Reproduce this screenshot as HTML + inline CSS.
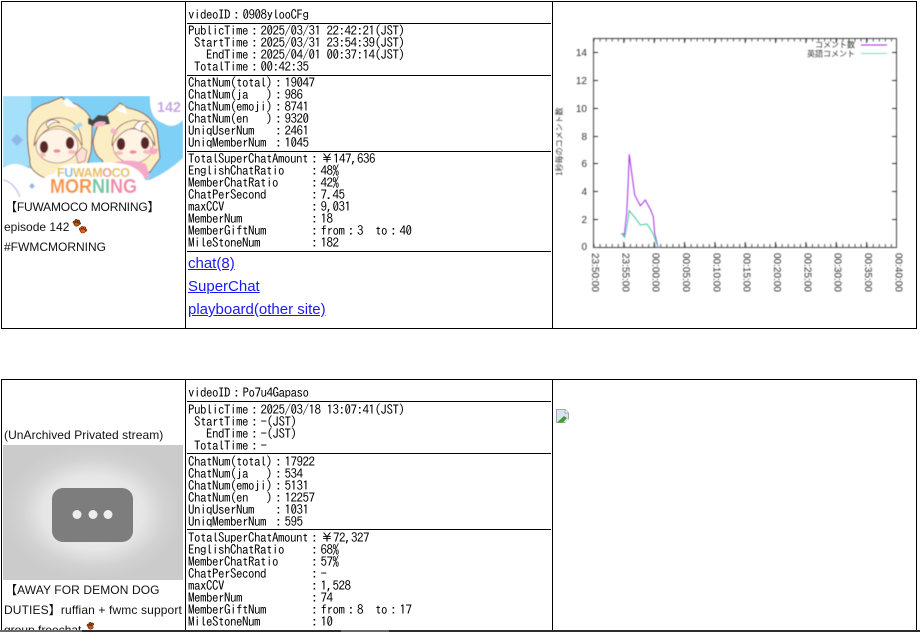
<!DOCTYPE html>
<html><head><meta charset="utf-8"><style>
html,body{margin:0;padding:0;width:920px;height:632px;overflow:hidden;background:#fff}
body{position:relative;color:#000;font-family:"Liberation Sans","Noto Sans CJK JP",sans-serif}
.h,.v{position:absolute;background:#000}
.h{height:1px}.v{width:1px}
pre{position:absolute;left:188px;margin:0;font:13px/12px "IPAGothic","Liberation Mono",monospace;letter-spacing:-.5px;white-space:pre;color:#000}
.t{position:absolute;left:4px;font-size:12px;line-height:20px;white-space:nowrap;color:#111}
a{position:absolute;left:188px;font-size:15px;line-height:20px;color:#1a1aee;text-decoration:underline;white-space:nowrap}
svg{position:absolute;overflow:hidden}
</style></head><body>

<!-- table 1 borders -->
<div class="h" style="left:1px;top:1px;width:916px"></div>
<div class="h" style="left:1px;top:328px;width:916px"></div>
<div class="v" style="left:1px;top:1px;height:328px"></div>
<div class="v" style="left:185px;top:1px;height:328px"></div>
<div class="v" style="left:552px;top:1px;height:328px"></div>
<div class="v" style="left:916px;top:1px;height:328px"></div>
<div class="h" style="left:187px;top:23px;width:364px"></div>
<div class="h" style="left:187px;top:75px;width:364px"></div>
<div class="h" style="left:187px;top:151px;width:364px"></div>
<div class="h" style="left:187px;top:251px;width:364px"></div>

<!-- thumb 1 -->
<svg style="left:3px;top:96px" width="180" height="101" viewBox="3 96 180 101">
<defs><filter id="b"><feGaussianBlur stdDeviation="0.4"/></filter></defs>
<g filter="url(#b)">
<rect x="3" y="96" width="180" height="101" fill="#7fd0f6"/>
<rect x="3" y="96" width="28" height="70" fill="#a4e0fa"/>
<path d="M3 168Q14 160 28 168Q50 170 60 178L150 180Q168 172 183 158V197H3Z" fill="#fff"/>
<path d="M3 180Q14 182 20 197" fill="none" stroke="#c8b4e6" stroke-width="1.200"/>
<path d="M14 137l3-3 3 3 3 3-3 3-3 3-3-3-3-3Z" fill="#8fb8ea"/>
<path d="M32 183l3 3-3 3-3-3Z" fill="#8fb8ea"/>
<path d="M150 96h33v24q-10 10-20 3q-14-4-13-27Z" fill="#fff"/>
<text x="157" y="112" font-family="Liberation Sans" font-weight="700" font-size="15" fill="#c3a3e3" textLength="24" lengthAdjust="spacingAndGlyphs">142</text>
<!-- left girl -->
<path d="M28 118Q34 106 48 103L62 97L66 103Q76 102 80 107Q92 114 92 128Q92 142 91 152L84 176L50 180Q28 172 30 160Q26 140 28 118Z" fill="#fbeec4" stroke="#8a4a44" stroke-width="1"/>
<path d="M63 101l4-3 11 10-12-2Z" fill="#fff"/>
<ellipse cx="57" cy="146" rx="21" ry="17" fill="#fff3e6" stroke="#8a4a44" stroke-width=".6"/>
<path d="M34 146Q36 118 60 118Q82 120 82 146Q74 128 58 126Q42 128 34 146Z" fill="#fbeec4" stroke="#8a4a44" stroke-width=".8"/>
<path d="M46 124Q52 116 60 123Q52 120 48 128Z" fill="#fff" stroke="#8a4a44" stroke-width=".7"/>
<ellipse cx="44" cy="147" rx="4.200" ry="6" fill="#5a2525"/>
<ellipse cx="70" cy="143" rx="4.200" ry="6" fill="#5a2525"/>
<ellipse cx="57" cy="151" rx="3.500" ry="1.800" fill="#f08a86"/>
<ellipse cx="42" cy="155" rx="4" ry="2" fill="#f8bcb8"/>
<ellipse cx="72" cy="152" rx="4" ry="2" fill="#f8bcb8"/>
<path d="M76 154l6-7 5 4-2 10-7 2Z" fill="#fde0d8" stroke="#8a4a44" stroke-width=".6"/>
<path d="M72 128l8-6 3 3-8 6Z" fill="#a9d6f0"/>
<!-- right girl -->
<path d="M93 142Q96 120 113 110L120 103L128 108Q150 112 157 130L160 158L150 172L110 178L102 160Q94 155 93 142Z" fill="#fbeec4" stroke="#8a4a44" stroke-width="1"/>
<path d="M116 110l8-5 3 9Z" fill="#fff"/>
<ellipse cx="133" cy="146" rx="20" ry="17" fill="#fff3e6" stroke="#8a4a44" stroke-width=".6"/>
<path d="M112 146Q112 124 134 120Q154 122 155 146Q148 130 134 128Q120 130 112 146Z" fill="#fbeec4" stroke="#8a4a44" stroke-width=".8"/>
<path d="M134 128Q138 118 148 122Q140 124 142 132Z" fill="#fff" stroke="#8a4a44" stroke-width=".7"/>
<ellipse cx="121" cy="144" rx="4.200" ry="6" fill="#5a2525"/>
<ellipse cx="145" cy="143" rx="4.200" ry="6" fill="#5a2525"/>
<ellipse cx="133" cy="152" rx="3.500" ry="1.800" fill="#f08a86"/>
<ellipse cx="119" cy="153" rx="4" ry="2" fill="#f8bcb8"/>
<ellipse cx="147" cy="152" rx="4" ry="2" fill="#f8bcb8"/>
<path d="M106 166Q125 156 146 164L150 178H112Z" fill="#f5a9c7"/>
<path d="M88 118l5 2 5-5 10 1 2 8-8 1-4-3-5 4-5-2Z" fill="#444"/>
<path d="M94 124q4-4 12-2l-2 4q-6 0-10 2Z" fill="#f5b4c8"/>
<path d="M112 128l6 3-2 4-6-3Z" fill="#f5b4c8"/>
<path d="M150 146l4 3 4-1-1 5-4 2-4-4Z" fill="#f5a9c7"/>
<!-- logo -->
<path d="M43 190Q38 176 54 174Q58 163 80 164Q110 160 128 165Q146 172 146 186Q146 194 138 197H50Z" fill="#fff"/>
<text x="57" y="177" font-family="Liberation Sans" font-weight="700" font-size="12.500" textLength="73" lengthAdjust="spacing" fill="#e6be50">F<tspan fill="#7cc0e8">U</tspan>WAM<tspan fill="#e89a80">O</tspan>C<tspan fill="#e6be50">O</tspan></text>
<text x="50" y="193" font-family="Liberation Sans" font-weight="700" font-size="20" textLength="87" lengthAdjust="spacingAndGlyphs" fill="#f5963c">MOR<tspan fill="#6fc6a4">NI</tspan><tspan fill="#f08aa8">NG</tspan></text>
</g>
</svg>

<div class="t" style="top:197px;left:5px;letter-spacing:-.18px">【FUWAMOCO MORNING】</div>
<div class="t" style="top:217px">episode 142</div>
<svg style="left:72px;top:219px" width="16" height="16" viewBox="0 0 16 16">
<g stroke="#3a1c0c" stroke-width=".5"><circle cx="2.200" cy="3.200" r="1.300" fill="#a8440f"/><circle cx="4.200" cy="1.500" r="1.300" fill="#a8440f"/><circle cx="6.500" cy="2.200" r="1.300" fill="#a8440f"/><circle cx="7.500" cy="4.300" r="1.200" fill="#a8440f"/><ellipse cx="4.600" cy="5.200" rx="2.600" ry="2" fill="#c9540f"/>
<circle cx="8.400" cy="10" r="1.300" fill="#d4590f"/><circle cx="10.200" cy="8.500" r="1.300" fill="#d4590f"/><circle cx="12.600" cy="9" r="1.300" fill="#d4590f"/><circle cx="13.700" cy="11.200" r="1.200" fill="#d4590f"/><ellipse cx="10.800" cy="12" rx="2.700" ry="2" fill="#e8620f"/></g></svg>
<div class="t" style="top:237px">#FWMCMORNING</div>

<pre style="top:9px">videoID：0908ylooCFg</pre>
<pre style="top:25px">PublicTime：2025/03/31 22:42:21(JST)
 StartTime：2025/03/31 23:54:39(JST)
   EndTime：2025/04/01 00:37:14(JST)
 TotalTime：00:42:35</pre>
<pre style="top:77px">ChatNum(total)：19047
ChatNum(ja   )：986
ChatNum(emoji)：8741
ChatNum(en   )：9320
UniqUserNum   ：2461
UniqMemberNum ：1045</pre>
<pre style="top:153px">TotalSuperChatAmount：￥147,636
EnglishChatRatio    ：48%
MemberChatRatio     ：42%
ChatPerSecond       ：7.45
maxCCV              ：9,031
MemberNum           ：18
MemberGiftNum       ：from：3  to：40
MileStoneNum        ：182</pre>
<a style="top:254px">chat(8)</a>
<a style="top:277px">SuperChat</a>
<a style="top:300px">playboard(other site)</a>

<!-- chart -->
<svg style="left:553px;top:20px" width="363" height="290" viewBox="553 20 363 290">
<defs><filter id="c"><feGaussianBlur stdDeviation="0.4"/></filter></defs>
<g filter="url(#c)">
<rect x="593.500" y="38.500" width="303" height="209" fill="none" stroke="#444" stroke-width="1"/>
<g stroke="#333" stroke-width="1">
<path d="M593 52.500h5M593 80.500h5M593 108.500h5M593 136.500h5M593 163.500h5M593 191.500h5M593 219.500h5M897 52.500h-5M897 80.500h-5M897 108.500h-5M897 136.500h-5M897 163.500h-5M897 191.500h-5M897 219.500h-5"/>
<path d="M623.800 247v-5M654.200 247v-5M684.500 247v-5M714.900 247v-5M745.200 247v-5M775.500 247v-5M805.900 247v-5M836.200 247v-5M866.600 247v-5M623.800 38v5M654.200 38v5M684.500 38v5M714.900 38v5M745.200 38v5M775.500 38v5M805.900 38v5M836.200 38v5M866.600 38v5"/>
<path d="M593.500 245.500H897M593.500 40H897" stroke-dasharray="1 5.070" stroke-width="3" stroke-opacity=".8"/>
</g>
<polyline fill="none" stroke="#a92fe6" stroke-width="1" points="622,233.300 624.300,235 626.700,213.300 628,186.700 629.300,154.300 631.300,170 634.700,195 640.300,205.700 645.300,200 650.700,210 653.300,216.700 654.700,233.300 658,247.300 660.300,247.300"/>
<polyline fill="none" stroke="#3fc49a" stroke-width="1" points="621.300,233.300 624.700,237.300 627.300,223.300 629.300,210.700 634.700,217.300 640.300,225 647,224 653,233.300 658,247.300"/>
<g font-family="Liberation Sans" font-size="10" fill="#333" text-anchor="end">
<text x="587" y="56">14</text><text x="587" y="84">12</text><text x="587" y="112">10</text><text x="587" y="140">8</text><text x="587" y="167">6</text><text x="587" y="195">4</text><text x="587" y="223">2</text><text x="587" y="250">0</text>
</g>
<g font-family="Liberation Sans" font-size="10" fill="#333">
<text transform="translate(592,253) rotate(90)">23:50:00</text>
<text transform="translate(622.300,253) rotate(90)">23:55:00</text>
<text transform="translate(652.700,253) rotate(90)">00:00:00</text>
<text transform="translate(683,253) rotate(90)">00:05:00</text>
<text transform="translate(713.400,253) rotate(90)">00:10:00</text>
<text transform="translate(743.700,253) rotate(90)">00:15:00</text>
<text transform="translate(774,253) rotate(90)">00:20:00</text>
<text transform="translate(804.400,253) rotate(90)">00:25:00</text>
<text transform="translate(834.700,253) rotate(90)">00:30:00</text>
<text transform="translate(865.100,253) rotate(90)">00:35:00</text>
<text transform="translate(895.400,253) rotate(90)">00:40:00</text>
</g>
<g font-family="'Noto Sans CJK JP',sans-serif" font-size="8" fill="#333">
<text x="855" y="47.500" text-anchor="end">コメント数</text>
<text x="855" y="56.500" text-anchor="end">英語コメント</text>
<text transform="translate(562,176) rotate(-90)" font-size="8">1秒毎のコメント数</text>
</g>
<path d="M861 45h26" stroke="#a92fe6"/><path d="M861 53.500h26" stroke="#7fe0c0"/>
</g>
</svg>

<!-- table 2 borders -->
<div class="h" style="left:1px;top:379px;width:916px"></div>
<div class="v" style="left:1px;top:379px;height:252px"></div>
<div class="v" style="left:185px;top:379px;height:252px"></div>
<div class="v" style="left:552px;top:379px;height:252px"></div>
<div class="v" style="left:916px;top:379px;height:252px"></div>
<div class="h" style="left:187px;top:401px;width:364px"></div>
<div class="h" style="left:187px;top:453px;width:364px"></div>
<div class="h" style="left:187px;top:529px;width:364px"></div>

<div class="t" style="top:425px;letter-spacing:.07px">(UnArchived Privated stream)</div>
<svg style="left:3px;top:445px" width="180" height="135" viewBox="0 0 180 135">
<defs><radialGradient id="g" cx="50%" cy="50%" r="50%"><stop offset="0" stop-color="#f0f0f0"/><stop offset=".55" stop-color="#e6e6e6"/><stop offset=".8" stop-color="#d2d2d2"/><stop offset="1" stop-color="#cbcbcb"/></radialGradient></defs>
<rect width="180" height="135" fill="#cbcbcb"/>
<rect width="180" height="135" fill="url(#g)"/>
<rect x="49" y="43" width="81" height="54" rx="11" fill="#7d7d7d"/>
<circle cx="74" cy="69.500" r="4.500" fill="#eee"/><circle cx="90" cy="69.500" r="4.500" fill="#eee"/><circle cx="105" cy="69.500" r="4.500" fill="#eee"/>
</svg>
<div class="t" style="top:580px;left:5px;letter-spacing:.1px">【AWAY FOR DEMON DOG</div>
<div class="t" style="top:600px;letter-spacing:.13px">DUTIES】ruffian + fwmc support</div>
<div class="t" style="top:620px">group freechat</div>
<svg style="left:86px;top:622px" width="14" height="14" viewBox="0 0 14 14"><g stroke="#3a1c0c" stroke-width=".5"><circle cx="2.200" cy="3.200" r="1.300" fill="#a8440f"/><circle cx="4.200" cy="1.500" r="1.300" fill="#a8440f"/><circle cx="6.500" cy="2.200" r="1.300" fill="#a8440f"/><ellipse cx="4.600" cy="5.200" rx="2.600" ry="2" fill="#c9540f"/></g></svg>

<pre style="top:387px">videoID：Po7u4Gapaso</pre>
<pre style="top:404px">PublicTime：2025/03/18 13:07:41(JST)
 StartTime：-(JST)
   EndTime：-(JST)
 TotalTime：-</pre>
<pre style="top:456px">ChatNum(total)：17922
ChatNum(ja   )：534
ChatNum(emoji)：5131
ChatNum(en   )：12257
UniqUserNum   ：1031
UniqMemberNum ：595</pre>
<pre style="top:532px">TotalSuperChatAmount：￥72,327
EnglishChatRatio    ：68%
MemberChatRatio     ：57%
ChatPerSecond       ：-
maxCCV              ：1,528
MemberNum           ：74
MemberGiftNum       ：from：8  to：17
MileStoneNum        ：10</pre>

<!-- broken image icon -->
<svg style="left:555px;top:408px" width="15" height="16" viewBox="0 0 15 16">
<path d="M1.500 1.500H10L13.500 5V14.500H1.500Z" fill="#d8e4f4" stroke="#a8a8a8"/>
<path d="M10 1.500V5H13.500" fill="#fff" stroke="#a8a8a8"/>
<path d="M2 14.500L9 8L12 10L8 14.500Z" fill="#4a9a2c"/>
<path d="M9.500 15.500L14.500 10.500V15.500Z" fill="#fff"/>
</svg>

<!-- bottom bar -->
<div style="position:absolute;left:0;top:630px;width:920px;height:2px;background:#2c2c2c"></div>
<div style="position:absolute;left:0;top:630px;width:82px;height:2px;background:#6a6a6a"></div>
<div style="position:absolute;left:341px;top:630px;width:48px;height:2px;background:#666"></div>
</body></html>
